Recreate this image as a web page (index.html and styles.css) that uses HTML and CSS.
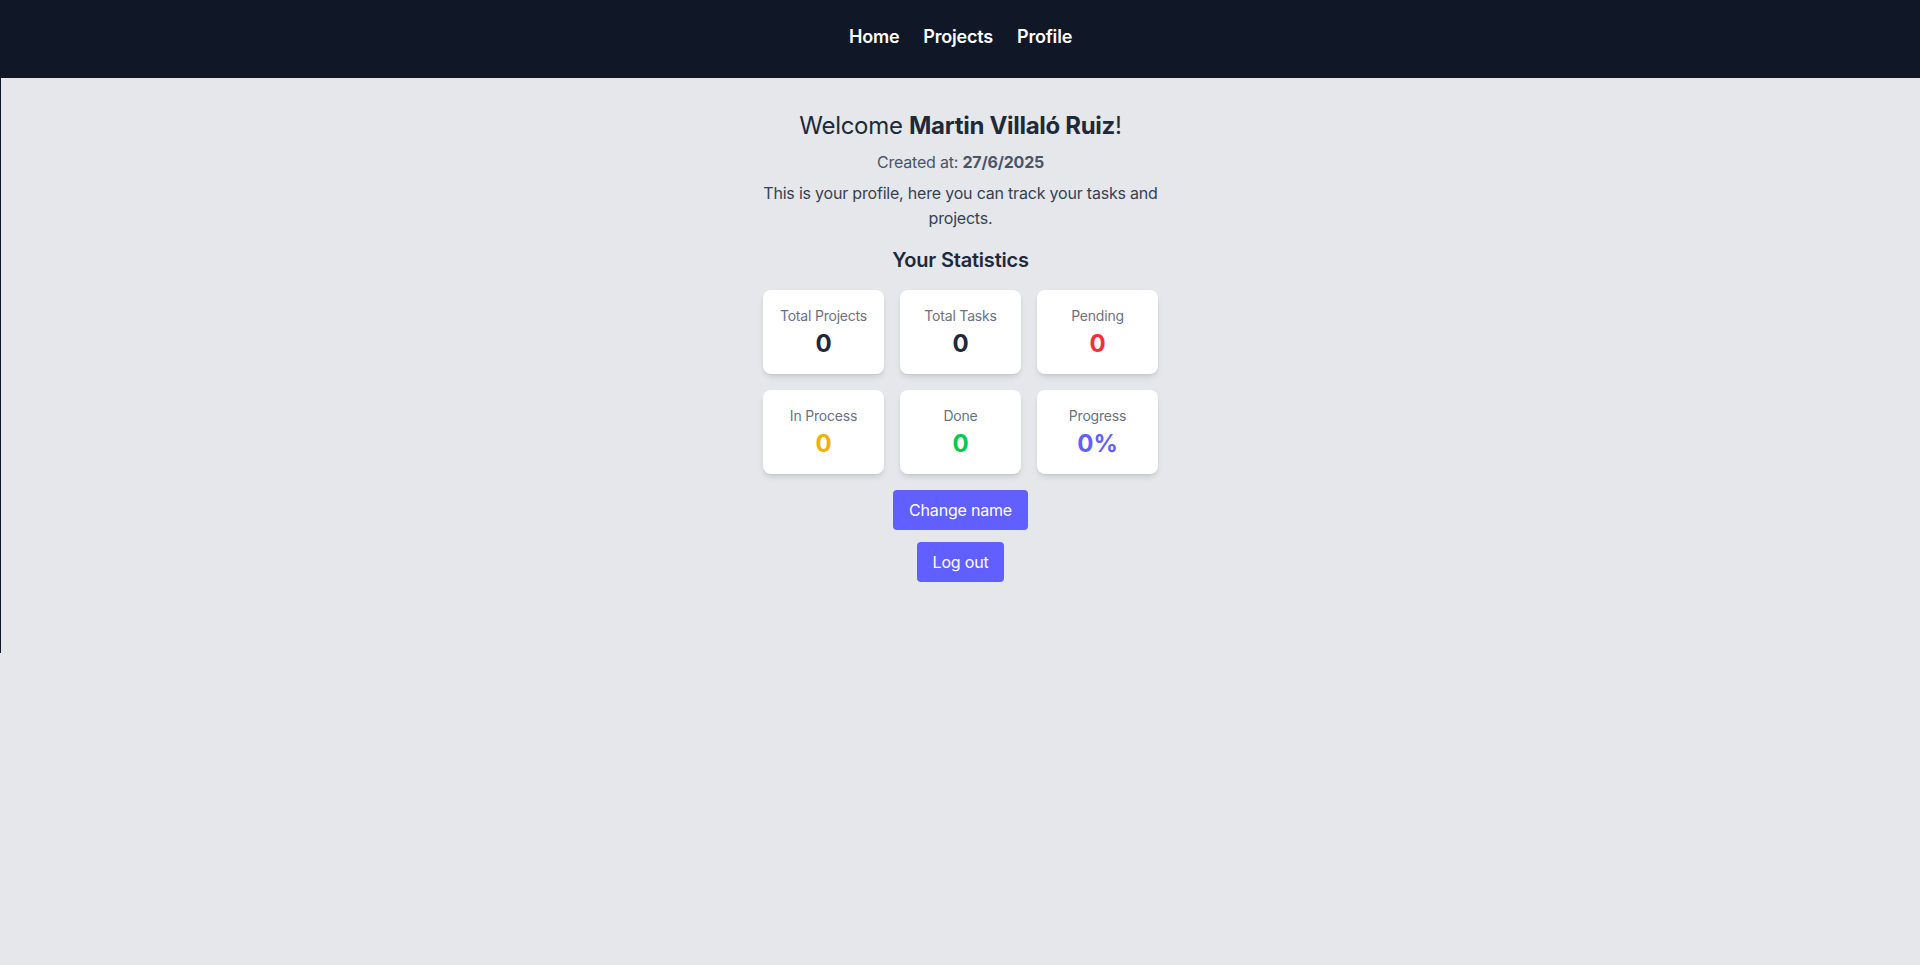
FILE: index.html
```html
<!DOCTYPE html>
<html lang="en">
<head>
<meta charset="utf-8">
<title>Profile</title>
<link rel="stylesheet" href="styles.css">
</head>
<body>
<div class="app">
  <header class="topbar">
    <nav class="nav">
      <a class="nav-link" href="#">Home</a>
      <a class="nav-link" href="#">Projects</a>
      <a class="nav-link" href="#">Profile</a>
    </nav>
  </header>
  <main class="profile">
    <h1 class="welcome">Welcome <strong>Martin Villaló Ruiz</strong>!</h1>
    <p class="created">Created at: <strong>27/6/2025</strong></p>
    <p class="intro">This is your profile, here you can track your tasks and projects.</p>
    <h2 class="stats-title">Your Statistics</h2>
    <div class="stats">
      <div class="card"><span class="card-label">Total Projects</span><span class="card-value">0</span></div>
      <div class="card"><span class="card-label">Total Tasks</span><span class="card-value">0</span></div>
      <div class="card"><span class="card-label">Pending</span><span class="card-value red">0</span></div>
      <div class="card"><span class="card-label">In Process</span><span class="card-value yellow">0</span></div>
      <div class="card"><span class="card-label">Done</span><span class="card-value green">0</span></div>
      <div class="card"><span class="card-label">Progress</span><span class="card-value indigo">0%</span></div>
    </div>
    <button class="btn" type="button">Change name</button>
    <button class="btn" type="button">Log out</button>
  </main>
</div>
</body>
</html>
```

FILE: styles.css
```css
* { box-sizing: border-box; }
html, body {
  margin: 0;
  padding: 0;
  background: #e5e7eb;
  font-family: Inter, "Noto Sans", sans-serif;
  color: #1e2939;
}
.app {
  min-height: 653px;
  border-left: 1px solid #101828;
}
.topbar {
  background: #101828;
  height: 78px;
  padding-top: 23px;
}
.nav {
  display: flex;
  justify-content: center;
  gap: 24px;
}
.nav-link {
  color: #ffffff;
  text-decoration: none;
  font-size: 18px;
  line-height: 28px;
  font-weight: 600;
  letter-spacing: -0.2px;
}
.profile {
  display: flex;
  flex-direction: column;
  align-items: center;
  padding-top: 32px;
  text-align: center;
}
.welcome {
  margin: 0;
  font-size: 24px;
  line-height: 32px;
  font-weight: 400;
  color: #1e2939;
  letter-spacing: -0.3px;
}
.welcome strong { font-weight: 700; }
.created {
  margin: 8px 0 0;
  font-size: 16px;
  line-height: 24px;
  color: #4a5565;
  letter-spacing: -0.2px;
}
.created strong { font-weight: 700; }
.intro {
  margin: 7px 0 0;
  max-width: 400px;
  font-size: 16px;
  line-height: 25px;
  color: #364153;
  letter-spacing: -0.2px;
}
.stats-title {
  margin: 15px 0 0;
  font-size: 20px;
  line-height: 28px;
  font-weight: 600;
  color: #1e2939;
  letter-spacing: -0.2px;
}
.stats {
  margin-top: 16px;
  display: grid;
  grid-template-columns: repeat(3, 121px);
  gap: 16px;
}
.card {
  background: #ffffff;
  border-radius: 8px;
  height: 84px;
  padding: 16px 8px 0;
  display: flex;
  flex-direction: column;
  align-items: center;
  box-shadow: 0 4px 6px -1px rgba(0,0,0,0.1), 0 2px 4px -2px rgba(0,0,0,0.1);
}
.card-label {
  font-size: 14px;
  line-height: 20px;
  color: #6a7282;
  letter-spacing: -0.2px;
  white-space: nowrap;
}
.card-value {
  margin-top: 2px;
  font-size: 24px;
  line-height: 32px;
  font-weight: 700;
  color: #1e2939;
}
.red { color: #fb2c36; }
.yellow { color: #f0b100; }
.green { color: #00c950; }
.indigo { color: #615fff; }
.btn {
  margin-top: 16px;
  background: #615fff;
  color: #ffffff;
  border: none;
  border-radius: 4px;
  height: 40px;
  padding: 0 16px;
  font-family: inherit;
  font-size: 16px;
  letter-spacing: -0.2px;
  cursor: pointer;
}
.btn + .btn { margin-top: 12px; }
```
